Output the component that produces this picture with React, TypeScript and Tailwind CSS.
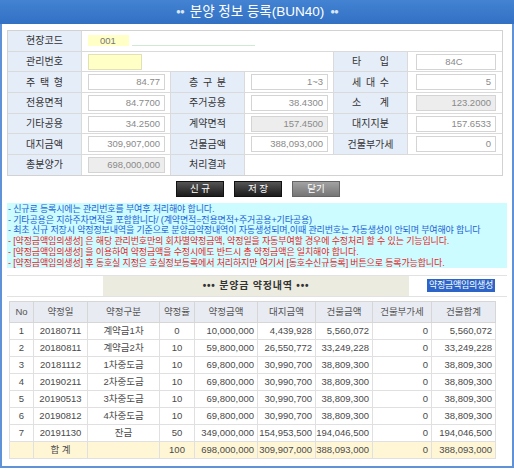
import type { ReactNode } from "react";

const FONT = "font-['Liberation_Sans','Noto_Sans_CJK_KR',sans-serif]";

function Label({ children, spread }: { children: ReactNode; spread?: string[] }) {
  return (
    <div className="flex items-center justify-center bg-[#e5edf9] text-[10px] text-[#333]">
      {spread ? (
        <span className="flex w-[37px] justify-between">
          {spread.map((c, i) => (
            <span key={i}>{c}</span>
          ))}
        </span>
      ) : (
        children
      )}
    </div>
  );
}

function Field({
  value,
  gray,
  center,
  wide,
}: {
  value: string;
  gray?: boolean;
  center?: boolean;
  wide?: boolean;
}) {
  return (
    <div className="flex items-center bg-white">
      <div
        className={`h-[16px] border border-[#d4d4d4] pr-[4px] text-[9.5px] leading-[14px] text-[#8a8a8a] ${
          wide ? "ml-[8px] w-[80px]" : "ml-[6px] w-[77px]"
        } ${gray ? "bg-[#ededed]" : "bg-white"} ${center ? "text-center" : "text-right"}`}
      >
        {value}
      </div>
    </div>
  );
}

const rows = [
  ["1", "20180711", "계약금1차", "0", "10,000,000", "4,439,928", "5,560,072", "0", "5,560,072"],
  ["2", "20180811", "계약금2차", "10", "59,800,000", "26,550,772", "33,249,228", "0", "33,249,228"],
  ["3", "20181112", "1차중도금", "10", "69,800,000", "30,990,700", "38,809,300", "0", "38,809,300"],
  ["4", "20190211", "2차중도금", "10", "69,800,000", "30,990,700", "38,809,300", "0", "38,809,300"],
  ["5", "20190513", "3차중도금", "10", "69,800,000", "30,990,700", "38,809,300", "0", "38,809,300"],
  ["6", "20190812", "4차중도금", "10", "69,800,000", "30,990,700", "38,809,300", "0", "38,809,300"],
  ["7", "20191130", "잔금", "50", "349,000,000", "154,953,500", "194,046,500", "0", "194,046,500"],
];

const heads = ["No", "약정일", "약정구분", "약정율", "약정금액", "대지금액", "건물금액", "건물부가세", "건물합계"];
const widths = ["w-[24px]", "w-[54px]", "w-[72px]", "w-[35px]", "w-[63px]", "w-[58px]", "w-[57px]", "w-[59px]", "w-[64px]"];

export default function App() {
  return (
    <div className={`w-[514px] bg-white ${FONT}`}>
      {/* title bar */}
      <div className="flex h-[24px] items-center justify-center gap-[6px] bg-gradient-to-b from-[#4383d2] to-[#3270c4] text-white">
        <span className="text-[8px] tracking-[-1px] text-[#d8e6f8]">●●</span>
        <span className="text-[13.5px]">분양 정보 등록(BUN40)</span>
        <span className="text-[8px] tracking-[-1px] text-[#d8e6f8]">●●</span>
      </div>

      <div className="border-x-2 border-b-2 border-[#5f92d6] px-[5px] pb-[7px] pt-[6px]">
        {/* form */}
        <div className="w-[496px] border border-[#d2d2d2]">
          <div className="grid auto-rows-[19.7px] grid-cols-[73px_88px_73px_88px_73px_94px] gap-px bg-[#dadada]">
            <Label>현장코드</Label>
            <div className="col-span-5 flex items-center bg-white">
              <div className="ml-[6px] h-[11px] w-[41px] bg-[#ffffc6] pl-[12px] text-[9.5px] leading-[11px] text-[#777]">
                001
              </div>
              <div className="ml-[3px] h-[11px] w-[123px] border-b border-[#cfe9d2]" />
            </div>

            <Label>관리번호</Label>
            <div className="col-span-3 flex items-center bg-white">
              <div className="ml-[6px] h-[16px] w-[54px] border border-[#e2e0b8] bg-[#ffffc6]" />
            </div>
            <Label spread={["타", "입"]} />
            <Field value="84C" center wide />

            <Label spread={["주", "택", "형"]} />
            <Field value="84.77" />
            <Label spread={["층", "구", "분"]} />
            <Field value="1~3" />
            <Label spread={["세", "대", "수"]} />
            <Field value="5" wide />

            <Label>전용면적</Label>
            <Field value="84.7700" />
            <Label>주거공용</Label>
            <Field value="38.4300" />
            <Label spread={["소", "계"]} />
            <Field value="123.2000" gray wide />

            <Label>기타공용</Label>
            <Field value="34.2500" />
            <Label>계약면적</Label>
            <Field value="157.4500" gray />
            <Label>대지지분</Label>
            <Field value="157.6533" wide />

            <Label>대지금액</Label>
            <Field value="309,907,000" />
            <Label>건물금액</Label>
            <Field value="388,093,000" />
            <Label>건물부가세</Label>
            <Field value="0" wide />

            <Label>총분양가</Label>
            <Field value="698,000,000" gray />
            <Label>처리결과</Label>
            <div className="col-span-3 bg-white" />
          </div>
        </div>

        {/* buttons */}
        <div className="mt-[5px] flex h-[16px] gap-[10px] pl-[169px] text-[9.5px] text-white">
          <button className="w-[48px] border border-[#111] bg-gradient-to-b from-[#555] to-[#1c1c1c] leading-[14px]">
            신 규
          </button>
          <button className="w-[48px] border border-[#111] bg-gradient-to-b from-[#555] to-[#1c1c1c] leading-[14px]">
            저 장
          </button>
          <button className="w-[48px] border border-[#666] bg-gradient-to-b from-[#a2a2a2] to-[#767676] leading-[14px]">
            닫기
          </button>
        </div>

        {/* notices */}
        <div className="mt-[6px] h-[65px] bg-[#ccfcff] pl-[1px] pt-[1px] text-[9px] leading-[10.8px] tracking-[-0.15px]">
          <p className="text-[#2262d6]">- 신규로 등록시에는 관리번호를 부여후 처리해야 합니다.</p>
          <p className="text-[#2262d6]">- 기타공용은 지하주차면적을 포함합니다/ (계약면적=전용면적+주거공용+기타공용)</p>
          <p className="text-[#2262d6]">
            - 최초 신규 저장시 약정정보내역을 기준으로 분양금약정내역이 자동생성되며,이때 관리번호는 자동생성이 안되며 부여해야 합니다
          </p>
          <p className="text-[#e8231c]">
            - [약정금액임의생성] 은 해당 관리번호만의 회차별약정금액, 약정일을 자동부여할 경우에 수정처리 할 수 있는 기능입니다.
          </p>
          <p className="text-[#e8231c]">
            - [약정금액임의생성] 을 이용하여 약정금액을 수정시에도 반드시 총 약정금액은 일치해야 합니다.
          </p>
          <p className="text-[#e8231c]">
            - [약정금액임의생성] 후 동호실 지정은 호실정보등록에서 처리하지만 여기서 [동호수신규등록] 버튼으로 등록가능합니다.
          </p>
        </div>

        {/* section header */}
        <div className="mt-[7px] flex h-[22px] border-y border-[#e2e2e2]">
          <div className="w-[96px]" />
          <div className="flex w-[306px] items-center justify-center bg-[#ecebe0] text-[10px] font-bold tracking-[0.8px] text-[#333]">
            ••• 분양금 약정내역 •••
          </div>
          <div className="flex flex-1 items-center pl-[18px]">
            <button className="h-[13px] w-[68px] bg-[#2c64c8] text-[9px] leading-[13px] tracking-[-0.3px] text-white">
              약정금액임의생성
            </button>
          </div>
        </div>

        {/* table */}
        <table className="mx-[2px] mt-[4px] w-[486px] table-fixed border-collapse border border-[#d6d6d6] text-[9.5px] text-[#4a4a4a]">
          <thead>
            <tr className="h-[21px] bg-[#e8ebf2]">
              {heads.map((h, i) => (
                <th key={h} className={`${widths[i]} border border-[#d6d6d6] font-normal text-[#555]`}>
                  {h}
                </th>
              ))}
            </tr>
          </thead>
          <tbody>
            {rows.map((r) => (
              <tr key={r[0]} className="h-[17px]">
                {r.map((c, i) => (
                  <td
                    key={i}
                    className={`border border-[#e0e0e0] ${i < 4 ? "text-center" : "pr-[3px] text-right"}`}
                  >
                    {c}
                  </td>
                ))}
              </tr>
            ))}
            <tr className="h-[17px] bg-[#fff6d5]">
              <td className="border border-[#e0e0e0]" />
              <td className="border border-[#e0e0e0] text-center">합 계</td>
              <td className="border border-[#e0e0e0]" />
              <td className="border border-[#e0e0e0] text-center">100</td>
              <td className="border border-[#e0e0e0] pr-[3px] text-right">698,000,000</td>
              <td className="border border-[#e0e0e0] pr-[3px] text-right">309,907,000</td>
              <td className="border border-[#e0e0e0] pr-[3px] text-right">388,093,000</td>
              <td className="border border-[#e0e0e0] pr-[3px] text-right">0</td>
              <td className="border border-[#e0e0e0] pr-[3px] text-right">388,093,000</td>
            </tr>
          </tbody>
        </table>
      </div>
    </div>
  );
}
